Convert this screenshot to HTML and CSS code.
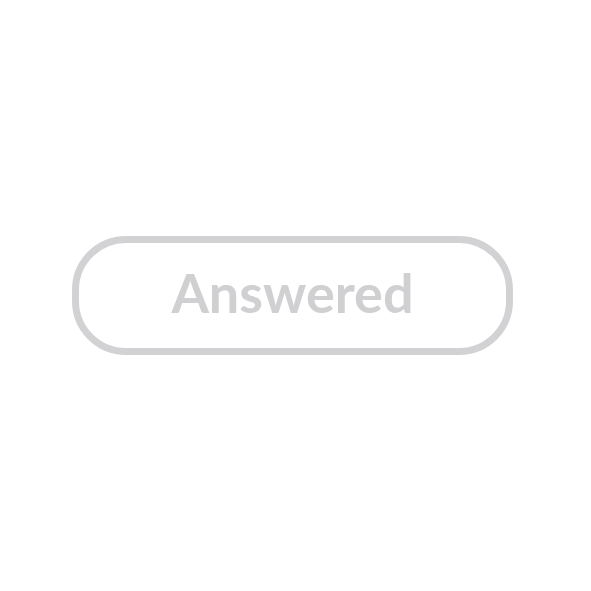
FILE: index.html
```html
<!DOCTYPE html>
<html>
<head>
<meta charset="utf-8">
<link rel="stylesheet" href="styles.css">
</head>
<body>
<div class="stage">
  <button class="answered">Answered</button>
</div>
</body>
</html>
```
FILE: styles.css
```css
html, body { margin: 0; padding: 0; background: #ffffff; }
.stage {
  width: 591px;
  height: 591px;
  display: flex;
  align-items: center;
  justify-content: center;
  padding-right: 6px;
  box-sizing: border-box;
}
.answered {
  box-sizing: border-box;
  width: 441px;
  height: 119px;
  border: 7px solid #d2d2d4;
  border-radius: 54px;
  background: #ffffff;
  color: #d0d0d2;
  font-family: "Lato", sans-serif;
  font-weight: 700;
  font-size: 54px;
  letter-spacing: 0;
  padding: 0 0 6px;
  margin: 0;
}
```
